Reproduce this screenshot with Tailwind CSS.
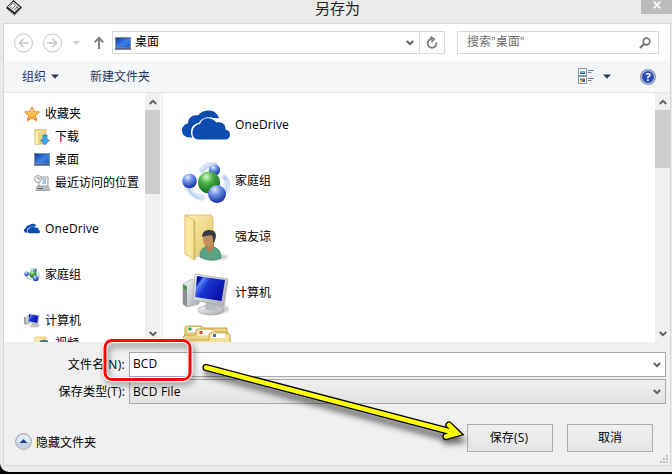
<!DOCTYPE html>
<html lang="zh-CN">
<head>
<meta charset="utf-8">
<title>另存为</title>
<script src="https://cdn.jsdelivr.net/npm/@tailwindcss/browser@4"></script>
</head>
<body class="bg-black overflow-hidden">
<svg width="0" height="0" class="absolute">
  <defs>
    <linearGradient id="folder" x1="0" x2="1" y1="0" y2="1"><stop offset="0" stop-color="#fdf3b8"/><stop offset="1" stop-color="#e0bf5c"/></linearGradient>
    <linearGradient id="screen" x1="0" x2="1" y1="0" y2="1"><stop offset="0" stop-color="#0a3a9c"/><stop offset=".55" stop-color="#3f80e8"/><stop offset="1" stop-color="#1c55c8"/></linearGradient>
    <linearGradient id="pcscreen" x1="0" x2="1" y1="0" y2=".6"><stop offset="0" stop-color="#0408a8"/><stop offset=".2" stop-color="#0a18b8"/><stop offset=".24" stop-color="#5a88f0"/><stop offset=".45" stop-color="#1a35d0"/><stop offset="1" stop-color="#0610a8"/></linearGradient>
    <linearGradient id="metal" x1="0" x2="1" y1="0" y2="1"><stop offset="0" stop-color="#fafafa"/><stop offset="1" stop-color="#a4a8ac"/></linearGradient>
    <linearGradient id="gold" x1="0" x2="0" y1="0" y2="1"><stop offset="0" stop-color="#ffe680"/><stop offset="1" stop-color="#ff9a2a"/></linearGradient>
    <radialGradient id="blueball" cx=".38" cy=".25" r=".75"><stop offset="0" stop-color="#e4edff"/><stop offset=".4" stop-color="#6f93e8"/><stop offset="1" stop-color="#1230a0"/></radialGradient>
    <radialGradient id="greenball" cx=".38" cy=".25" r=".75"><stop offset="0" stop-color="#d8f8cc"/><stop offset=".4" stop-color="#48b048"/><stop offset="1" stop-color="#0c6c1c"/></radialGradient>
    <filter id="soft"><feGaussianBlur stdDeviation="1.1"/></filter>
    <filter id="shade" x="-20%" y="-20%" width="140%" height="160%"><feGaussianBlur stdDeviation="3"/></filter>
    <symbol id="desktop" viewBox="0 0 16 13"><rect x=".5" y=".5" width="15" height="12" fill="#8a9bb4" stroke="#8795a8"/><rect x="1" y="1" width="14" height="9.5" fill="url(#screen)"/><path d="M.5 11.5h15" stroke="#52667c" stroke-width="1.6"/></symbol>
    <symbol id="cloud" viewBox="0 0 48 30"><path d="M8 27.500C3 27.500 0 24.500 0 20.500C0 17 2.500 14 6 13.500C6 8 10.500 4.500 16 5.500C19 1.500 23 .5 27 .5C32 .5 36 4 37 8.500C35 8 33 8 31.500 8C27 6 19 7.500 17 13C12 13.500 9 17 9 22C9 24 9.300 26 10.500 27.500Z" fill="#0c4cb0"/><path d="M17 29.500C13 29.500 10.500 27 10.500 22.800C10.500 18 14 14.500 18 14C19.500 9 24 7.500 28 8.500C31 9 33 11 34.500 12.500C40 11 44 15 43.500 19.500C46.500 20 48 22 48 24.500C48 27.500 46 29.500 43 29.500Z" fill="#0c4cb0"/></symbol>
    <symbol id="homegroup" viewBox="0 0 48 42"><path d="M20 10Q21 2 35 3M6 23Q9 35 22 36M41 14Q49 20 44 30" fill="none" stroke="#7ea3d4" stroke-width="4" opacity=".65" filter="url(#soft)"/><path d="M20 8Q24 1 35 4M8 25Q10 33 22 36M44 18Q48 24 45 30" fill="none" stroke="#dce8f8" stroke-width="2"/><circle cx="32.500" cy="8" r="5.600" fill="url(#blueball)"/><circle cx="27" cy="20.500" r="11" fill="url(#greenball)"/><circle cx="7.500" cy="19" r="7.300" fill="url(#blueball)"/><circle cx="35" cy="32" r="9" fill="url(#blueball)"/></symbol>
    <symbol id="computer" viewBox="0 0 48 43"><ellipse cx="34" cy="36" rx="13" ry="5" fill="#777" opacity=".4" filter="url(#soft)"/><path d="M1 11L10 6L17 9V31L5 34L1 31Z" fill="url(#metal)" stroke="#aaa" stroke-width=".7"/><path d="M1 11L5 13V34L1 31Z" fill="#8a8e93"/><path d="M1.500 12.500L4.500 14V17L1.500 15.500Z" fill="#18a528"/><ellipse cx="29" cy="37" rx="13" ry="5" fill="url(#metal)" stroke="#999" stroke-width=".7"/><path d="M24 29H35V36Q30 39 23 36Z" fill="#b8bcc2"/><path d="M13 1L46 6L42 33L11 27Z" fill="url(#metal)" stroke="#aaa" stroke-width=".8"/><path d="M15 3L43 7L39.500 28L13 24Z" fill="url(#pcscreen)"/></symbol>
    <symbol id="chev" viewBox="0 0 8 6"><path d="M.8 1L4 4.200L7.200 1" fill="none" stroke="#606060" stroke-width="2"/></symbol>
  </defs>
</svg>

<div class="relative flex h-[472px] w-[672px] flex-col rounded-bl-[9px] bg-[#ebebeb] font-['Open_Sans','Noto_Sans_CJK_SC',sans-serif] text-[12px] leading-[16px] text-black overflow-hidden">
  <header class="flex h-[23px] shrink-0 items-start">
    <svg class="ml-[6px] h-[16px] w-[17px]" viewBox="0 0 17 16"><path d="M7.500 0L16 7.500L8.500 15.500L0 8Z" fill="#222"/><path d="M7.300 1.200L14.800 7.300L8.600 12.500L1.200 6.800Z" fill="#e8e8e8" stroke="#111" stroke-width=".7"/><path d="M3.500 6.500L7 3L9.500 5.300L6.500 8.500Z" fill="#fff" stroke="#444" stroke-width=".7"/><path d="M8 10L12.500 6M10 11.200L14 7.500M10.500 6.500L12.500 9" stroke="#444" stroke-width=".8"/><path d="M1.500 9.500L8.500 14.500L15 8.800" fill="none" stroke="#bbb" stroke-dasharray="1.500 1"/></svg>
    <h1 class="ml-[292px] w-[60px] text-[15px] leading-[17px] font-normal text-[#222]">另存为</h1>
    <div class="ml-auto flex h-[14px] w-[31px] items-center justify-center bg-[#bcbcbc]"><svg class="-mt-[5px] ml-[1px] h-[8px] w-[8px]" viewBox="0 0 8 8"><path d="M.7 .7L7.300 7.300M7.300 .7L.7 7.300" stroke="#fff" stroke-width="1.700"/></svg></div>
  </header>

  <main class="ml-[3px] flex h-[443px] w-[668px] flex-col border border-[#d8d8d8] bg-[#f0f0f0]">
    <nav class="flex h-[37px] shrink-0 items-center bg-white">
      <svg class="ml-[9px] h-[20px] w-[96px]" viewBox="0 0 96 20" fill="none" stroke="#c8c8c8"><circle cx="10.500" cy="10" r="9"/><path d="M15.500 10H6.500M10.500 6L6.500 10L10.500 14" stroke-width="1.700"/><circle cx="39.500" cy="10" r="9"/><path d="M34 10H43.500M39.500 6L43.500 10L39.500 14" stroke-width="1.700"/><path d="M59.500 8H67L63.200 12Z" fill="#d0d0d0" stroke="none"/><path d="M86 16V5M81.800 9.200L86 5L90.200 9.200" stroke="#808080" stroke-width="2"/></svg>
      <div class="ml-[3px] flex h-[23px] w-[333px] items-center border border-[#d9d9d9]">
        <svg class="ml-[2px] mt-px h-[13px] w-[16px]"><use href="#desktop"/></svg>
        <span class="ml-[4px] -mt-[2px]">桌面</span>
        <svg class="ml-auto mr-[5px] h-[6px] w-[8px]"><use href="#chev"/></svg>
        <div class="flex h-[21px] w-[25px] items-center justify-center border-l border-[#d9d9d9]"><svg class="h-[13px] w-[12px]" viewBox="0 0 12 13" fill="none" stroke="#7c7c7c" stroke-width="1.800"><path d="M10.300 6.500A4.400 4.400 0 1 1 6.500 3"/><path d="M4.500 .8L8 3.200L5.500 6"/></svg></div>
      </div>
      <div class="ml-[12px] flex h-[23px] w-[202px] items-center border border-[#d9d9d9] pl-[9px] pr-[7px] text-[#6d6d6d]"><span class="-mt-px">搜索"桌面"</span><svg class="ml-auto h-[12px] w-[12px]" viewBox="0 0 12 12" fill="none" stroke="#777"><circle cx="7.500" cy="4.500" r="3.300" stroke-width="1.700"/><path d="M5 7L1 11" stroke-width="2.200"/></svg></div>
    </nav>

    <div class="flex h-[32px] shrink-0 items-center border-b border-[#e4e6e8] bg-[#f5f6f7] text-[#1e395b]">
      <span class="ml-[18px]">组织</span>
      <svg class="ml-[5px] h-[5px] w-[8px]" viewBox="0 0 8 5"><path d="M0 .5H8L4 4.800Z" fill="#1e395b"/></svg>
      <span class="ml-[31px]">新建文件夹</span>
      <svg class="ml-auto h-[17px] w-[18px]" viewBox="0 0 18 17"><g fill="#fff" stroke="#8796a8"><rect x="1.500" y=".5" width="8" height="7"/><rect x="1.500" y="8.500" width="8" height="7"/></g><path d="M3 3H8V6H3Z" fill="#66b5e8"/><path d="M3 5H8V6H3Z" fill="#265370"/><path d="M3 10.500H5.500V12H3Z" fill="#3a9a38"/><path d="M5.500 10.500H8V12H5.500Z" fill="#d23c28"/><path d="M3 12H5.500V14H3Z" fill="#e8b42d"/><path d="M5.500 12H8V14H5.500Z" fill="#285cba"/><path d="M11 2.500H17M11 4.500H14.500M11 10.500H17M11 12.500H14.500" stroke="#6b7e95"/></svg>
      <svg class="ml-[8px] h-[5px] w-[8px]" viewBox="0 0 8 5"><path d="M0 .5H8L4 4.800Z" fill="#1e395b"/></svg>
      <div class="ml-[30px] mr-[15px] flex size-[14px] items-center justify-center rounded-full bg-[#2749bb] text-[11px] leading-[12px] font-bold text-white ring-1 ring-[#8e99ad] inset-ring inset-ring-[#c6cad2]">?</div>
    </div>

    <div class="flex h-[249px] shrink-0 bg-white">
      <aside class="w-[141px] overflow-hidden pt-[9px] whitespace-nowrap">
        <div class="flex h-[23px] items-center pl-[20px]"><svg class="mr-[5px] h-[16px] w-[16px]" viewBox="0 0 16 16"><path d="M8 .8L10.200 5.600L15.400 6L11.400 9.600L12.800 14.800L8 12L3.200 14.800L4.600 9.600L.6 6L5.800 5.600Z" fill="url(#gold)" stroke="#e6802c"/></svg>收藏夹</div>
        <div class="flex h-[23px] items-center pl-[30px]"><svg class="mr-[5px] h-[16px] w-[16px]" viewBox="0 0 16 16"><path d="M1 .5H12V15H1Z" fill="url(#folder)" stroke="#d6b75c" stroke-width=".7"/><path d="M1 .5L5 3V16L1 15Z" fill="#fff0a8" stroke="#d6b75c" stroke-width=".6"/><path d="M9 6H13V11H15.500L11 15.800L6.500 11H9Z" fill="#3ba9ea" stroke="#1a71b8" stroke-width=".7"/></svg>下载</div>
        <div class="flex h-[23px] items-center pl-[30px]"><svg class="mr-[5px] h-[13px] w-[16px]"><use href="#desktop"/></svg>桌面</div>
        <div class="flex h-[23px] items-center pl-[30px]"><svg class="mr-[5px] h-[16px] w-[16px]" viewBox="0 0 16 16"><path d="M5 2H14V12H5Z" fill="#f5fafd" stroke="#999"/><path d="M8 4H12M9 6H12M8 8H12" stroke="#4b9bd5"/><path d="M3 11H13L15.500 13V15.500H2Z" fill="#bcbfc3" stroke="#888" stroke-width=".7"/><path d="M4 13.500H9" stroke="#555"/><circle cx="4" cy="4" r="3.400" fill="#fff" stroke="#999"/><path d="M4 2V4H6" fill="none" stroke="#555" stroke-width=".8"/></svg>最近访问的位置</div>
        <div class="mt-[23px] flex h-[23px] items-center pl-[20px] tracking-[.15px]"><svg class="mr-[5px] h-[11px] w-[16px]"><use href="#cloud"/></svg>OneDrive</div>
        <div class="mt-[23px] flex h-[23px] items-center pl-[20px]"><svg class="mr-[5px] h-[15px] w-[16px]"><use href="#homegroup"/></svg>家庭组</div>
        <div class="mt-[23px] flex h-[23px] items-center pl-[20px]"><svg class="mr-[5px] h-[15px] w-[16px]"><use href="#computer"/></svg>计算机</div>
        <div class="flex h-[23px] items-center pl-[30px]"><svg class="mr-[5px] h-[16px] w-[16px]" viewBox="0 0 16 16"><path d="M1 1H12V15H1Z" fill="url(#folder)" stroke="#d6b75c" stroke-width=".7"/><path d="M6 4H14V14H6Z" fill="#4a6b88"/><path d="M7 4V14M13 4V14" stroke="#ddd" stroke-dasharray="1 1"/></svg>视频</div>
      </aside>
      <div class="flex w-[15px] flex-col items-center bg-[#f0f0f0] pb-[5px]"><svg class="mt-[6px] h-[6px] w-[8px] rotate-180"><use href="#chev"/></svg><div class="mt-[5px] h-[84px] w-full bg-[#cdcdcd]"></div><svg class="mt-auto h-[6px] w-[8px]"><use href="#chev"/></svg></div>
      <div class="ml-px w-[2px] bg-[#f0f0f0]"></div>
      <section class="h-[249px] flex-1 overflow-hidden pt-[4px] pl-[19px]">
        <div class="flex h-[56px] items-center tracking-[.15px]"><svg class="mr-[5px] h-[30px] w-[48px]"><use href="#cloud"/></svg>OneDrive</div>
        <div class="flex h-[56px] items-center"><svg class="mr-[5px] mt-[3px] h-[42px] w-[48px]"><use href="#homegroup"/></svg>家庭组</div>
        <div class="flex h-[56px] items-center"><svg class="mr-[5px] h-[48px] w-[48px]" viewBox="0 0 48 48"><ellipse cx="32" cy="44" rx="14" ry="3" fill="#777" opacity=".4" filter="url(#soft)"/><path d="M4 2L29 2L31 5V39L13 44Z" fill="url(#folder)" stroke="#dfc272"/><path d="M3 2L13 8V47L3 41Z" fill="#fae8a0" stroke="#d9bd6c"/><path d="M12 8V46" stroke="#c9a84e"/><path d="M18 44Q18 35 24 34H32Q39 36 39 45Q29 50 18 44Z" fill="#58a384" stroke="#348463" stroke-width=".7"/><path d="M23 34L28 40L32 34V29H24Z" fill="#b87c50"/><ellipse cx="27" cy="26" rx="6" ry="8" fill="#c28b60"/><path d="M20 24Q20 18 26 17Q34 16 34 23Q33 29 31 30Q32 24 29 22Q23 23 20 24Z" fill="#343b42"/></svg>强友谅</div>
        <div class="flex h-[56px] items-center"><svg class="mr-[5px] mt-[3px] h-[43px] w-[48px]"><use href="#computer"/></svg>计算机</div>
        <div class="flex h-[56px] items-start"><svg class="mt-[4px] h-[40px] w-[49px]" viewBox="0 0 49 40"><path d="M3 8V3Q3 1 5 1H19L22 3H45V12L48 14V40H1V14Z" fill="#ead486" stroke="#c4a44b"/><rect x="6" y="2" width="12" height="5" fill="#fff"/><rect x="6.500" y="2.500" width="3" height="3" fill="#22a245"/><path d="M2 10H14V6Q14 4 16 4H31L34 7H46V13" fill="#f7e7a7" stroke="#c4a44b"/><rect x="17" y="5" width="12" height="5" fill="#fff"/><rect x="17.500" y="6" width="3" height="3" fill="#e04020"/><path d="M1 15H27V10Q27 8 29 8H44L48 10V40H1Z" fill="#f5e29a" stroke="#c4a44b"/><rect x="30" y="8.500" width="13" height="4.500" fill="#fff"/><rect x="31" y="9" width="3" height="3" fill="#1c80cc"/></svg></div>
      </section>
      <div class="flex w-[15px] flex-col items-center bg-[#f0f0f0] pb-[5px]"><svg class="mt-[6px] h-[6px] w-[8px] rotate-180"><use href="#chev"/></svg><div class="mt-[5px] h-[58px] w-full bg-[#cdcdcd]"></div><svg class="mt-auto h-[6px] w-[8px]"><use href="#chev"/></svg></div>
    </div>

    <footer class="flex flex-1 flex-col pt-[10px]">
      <div class="flex h-[25px] items-center"><label class="w-[121px] text-right tracking-[.3px]">文件名(N):</label><div class="ml-[4px] flex h-[25px] w-[537px] items-center border border-[#a9a9a9] bg-white pl-[3px] pr-[4px]"><span class="-mt-[2px] tracking-[.1px]">BCD</span><svg class="ml-auto h-[6px] w-[8px]"><use href="#chev"/></svg></div></div>
      <div class="mt-[2px] flex h-[25px] items-center"><label class="w-[121px] text-right tracking-[.2px]">保存类型(T):</label><div class="ml-[4px] flex h-[25px] w-[537px] items-center border border-[#a9a9a9] bg-linear-to-b from-[#f0f0f0] to-[#e3e3e3] pl-[3px] pr-[4px]"><span class="tracking-[.2px]">BCD File</span><svg class="ml-auto h-[6px] w-[8px]"><use href="#chev"/></svg></div></div>
      <div class="mt-[20px] flex h-[28px] items-center">
        <svg class="ml-[11px] mt-[7px] h-[17px] w-[17px]" viewBox="0 0 17 17"><circle cx="8.500" cy="8.500" r="7.800" fill="#e4eaf2" stroke="#8c98aa"/><path d="M1.500 9A7 7 0 0 0 15.500 9Z" fill="#c7d2e4"/><path d="M4.500 10L8.500 6L12.500 10Z" fill="#22458e"/></svg>
        <span class="ml-[4px] mt-[9px]">隐藏文件夹</span>
        <button class="ml-auto h-[28px] w-[86px] border border-[#acacac] bg-linear-to-b from-[#f0f0f0] to-[#e5e5e5] pr-[2px] tracking-[.2px]">保存(S)</button>
        <button class="ml-[14px] mr-[17px] h-[28px] w-[86px] border border-[#acacac] bg-linear-to-b from-[#f0f0f0] to-[#e5e5e5]">取消</button>
      </div>
      <svg class="mt-[3px] ml-auto mr-[2px] h-[8px] w-[8px]" viewBox="0 0 8 8"><path d="M6 0h2v2H6zM3 3h2v2H3zM6 3h2v2H6zM0 6h2v2H0zM3 6h2v2H3zM6 6h2v2H6z" fill="#bdbdbd"/></svg>
    </footer>
  </main>

  <svg class="pointer-events-none absolute inset-0 h-[474px] w-[672px]" viewBox="0 0 672 474" fill="none" stroke-linecap="round">
    <rect x="107" y="345" width="86" height="38" rx="7" stroke="#000" stroke-opacity=".6" stroke-width="3" filter="url(#shade)"/>
    <rect x="105" y="340.500" width="85" height="39" rx="7" stroke="#fff" stroke-width="5"/>
    <rect x="105" y="340.500" width="85" height="39" rx="7" stroke="#f80808" stroke-width="3"/>
    <path d="M206 373L453 439M449 430L460 440L446 441" stroke="#000" stroke-opacity=".6" stroke-width="6" filter="url(#shade)"/>
    <path d="M206 367.500L450 431.500M449 425L457.500 433.300L446 436.500" stroke="#000" stroke-width="7.200" stroke-miterlimit="8"/>
    <path d="M206 367.500L450 431.500M449 425L457.500 433.300L446 436.500" stroke="#ff0" stroke-width="4.600" stroke-miterlimit="8"/>
  </svg>
</div>
</body>
</html>
